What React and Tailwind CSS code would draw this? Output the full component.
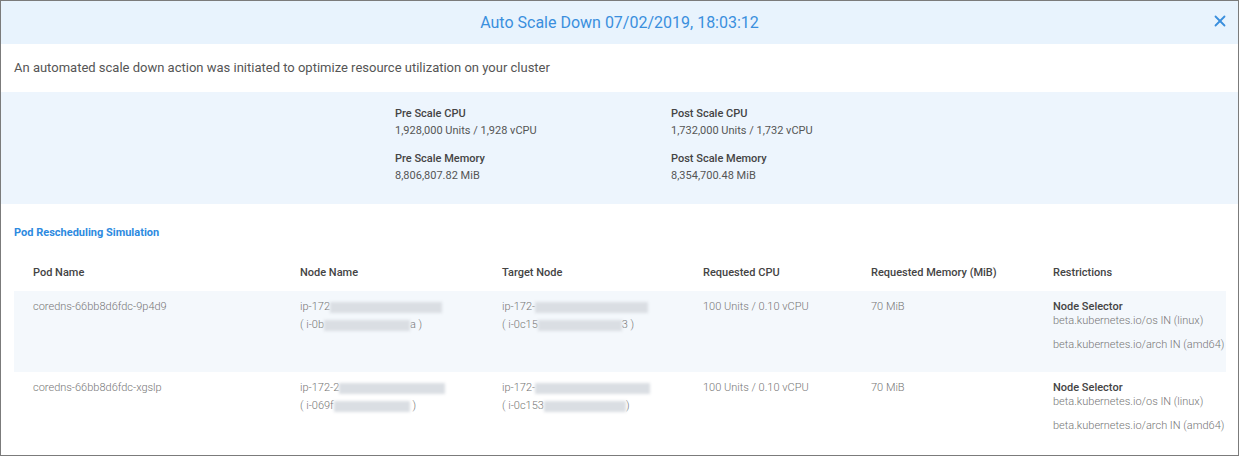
import React from "react";

const Blur = ({ w, className = "" }) => (
  <span
    className={`inline-block h-[11px] align-middle bg-[#dadee3] blur-[1.5px] ${className}`}
    style={{ width: w }}
  />
);

const rows = [
  {
    pod: "coredns-66bb8d6fdc-9p4d9",
    node: [
      <>ip-172<Blur w={112} /></>,
      <>( i-0b<Blur w={86} />a )</>,
    ],
    target: [
      <>ip-172-<Blur w={113} /></>,
      <>( i-0c15<Blur w={84} />3 )</>,
    ],
    bg: "bg-[#f4f8fc]",
    h: "h-[81px]",
  },
  {
    pod: "coredns-66bb8d6fdc-xgslp",
    node: [
      <>ip-172-2<Blur w={106} /></>,
      <>( i-069f<Blur w={76} /> )</>,
    ],
    target: [
      <>ip-172-<Blur w={115} /></>,
      <>( i-0c153<Blur w={82} />)</>,
    ],
    bg: "bg-white",
    h: "h-[83px]",
  },
];

export default function App() {
  return (
    <div
      className="w-[1239px] h-[456px] border border-[#7b7b7b] bg-white flex flex-col overflow-hidden"
      style={{ fontFamily: "Roboto, 'Noto Sans', sans-serif" }}
    >
      <div className="h-[43px] shrink-0 bg-[#e8f3fd] relative flex items-center justify-center">
        <span className="text-[16px] text-[#3a8fdd] leading-[20px]">
          Auto Scale Down 07/02/2019, 18:03:12
        </span>
        <svg
          className="absolute right-[12px] top-[14px]"
          width="12"
          height="12"
          viewBox="0 0 12 12"
          fill="none"
          stroke="#3a8fdd"
          strokeWidth="1.8"
          strokeLinecap="round"
        >
          <line x1="1.5" y1="1.5" x2="10.5" y2="10.5" />
          <line x1="10.5" y1="1.5" x2="1.5" y2="10.5" />
        </svg>
      </div>
      <div className="h-[48px] shrink-0 flex items-center pl-[13px] text-[13px] text-[#555]">
        An automated scale down action was initiated to optimize resource utilization on your cluster
      </div>
      <div className="h-[112px] shrink-0 bg-[#edf5fd] pt-[14px] pl-[394px]">
        <div className="grid grid-cols-[276px_auto] gap-y-[12px] text-[11px]">
          {[
            ["Pre Scale CPU", "1,928,000 Units / 1,928 vCPU"],
            ["Post Scale CPU", "1,732,000 Units / 1,732 vCPU"],
            ["Pre Scale Memory", "8,806,807.82 MiB"],
            ["Post Scale Memory", "8,354,700.48 MiB"],
          ].map(([l, v]) => (
            <div key={l}>
              <div className="font-medium text-[#444] leading-[16px]">{l}</div>
              <div className="mt-[1px] text-[#555] leading-[16px]">{v}</div>
            </div>
          ))}
        </div>
      </div>
      <div className="mt-[22px] pl-[13px] text-[11px] font-bold text-[#2d8ae0] leading-[14px]">
        Pod Rescheduling Simulation
      </div>
      <div className="mt-[14px] mx-[12px] ml-[13px] text-[11px]">
        <div className="grid grid-cols-[286px_202px_201px_168px_182px_1fr] h-[37px] pt-[2px] items-center font-medium text-[#444]">
          <div className="pl-[19px]">Pod Name</div>
          <div>Node Name</div>
          <div>Target Node</div>
          <div>Requested CPU</div>
          <div>Requested Memory (MiB)</div>
          <div>Restrictions</div>
        </div>
        {rows.map((r) => (
          <div
            key={r.pod}
            className={`grid grid-cols-[286px_202px_201px_168px_182px_1fr] ${r.h} ${r.bg} pt-[8px] text-[#767676] font-light leading-[16px]`}
          >
            <div className="pl-[19px]">{r.pod}</div>
            <div>
              <div>{r.node[0]}</div>
              <div className="mt-[2px]">{r.node[1]}</div>
            </div>
            <div>
              <div>{r.target[0]}</div>
              <div className="mt-[2px]">{r.target[1]}</div>
            </div>
            <div>100 Units / 0.10 vCPU</div>
            <div>70 MiB</div>
            <div className="whitespace-nowrap">
              <div className="mt-[1px] leading-[14px] font-medium text-[#444]">Node Selector</div>
              <div className="leading-[14px]">beta.kubernetes.io/os IN (linux)</div>
              <div className="mt-[10px] leading-[14px]">beta.kubernetes.io/arch IN (amd64)</div>
            </div>
          </div>
        ))}
      </div>
    </div>
  );
}
